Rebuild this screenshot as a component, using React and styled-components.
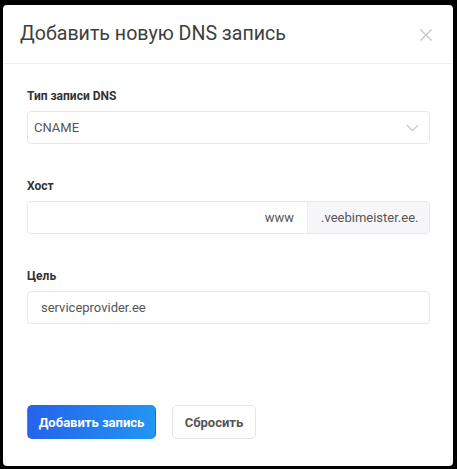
import React from "react";
import styled, { createGlobalStyle } from "styled-components";

const Global = createGlobalStyle`
  html, body { margin: 0; padding: 0; background: #000; }
  body { font-family: Roboto, "Noto Sans", sans-serif; }
  * { box-sizing: border-box; }
`;

const Page = styled.div`
  padding: 5px 0 0 3px;
  width: 457px;
  height: 469px;
`;

const Dialog = styled.div`
  width: 450px;
  height: 461px;
  background: #fff;
  border-radius: 4px;
  display: flex;
  flex-direction: column;
`;

const Header = styled.div`
  height: 59px;
  border-bottom: 1px solid #efeff5;
  display: flex;
  align-items: center;
  justify-content: space-between;
  padding: 0 20px 0 17px;
`;

const Title = styled.h2`
  margin: 0;
  font-size: 19.6px;
  font-weight: 400;
  color: #3e3e3e;
  margin-top: -1px;
`;

const Close = styled.button`
  border: 0;
  background: none;
  padding: 0;
  width: 14px;
  height: 14px;
  display: flex;
  margin-top: 2px;
`;

const Body = styled.div`
  padding: 24px 23px 0 24px;
  display: flex;
  flex-direction: column;
  gap: 34px;
`;

const Field = styled.div`
  display: flex;
  flex-direction: column;
  gap: 7px;
`;

const Label = styled.label`
  font-size: 12px;
  line-height: 16px;
  font-weight: 700;
  color: #333;
`;

const Control = styled.div`
  height: 33px;
  border: 1px solid #e6e6ee;
  border-radius: 4px;
  display: flex;
  align-items: center;
  overflow: hidden;
  font-size: 13px;
  color: #555;
`;

const Value = styled.span`
  flex: 1;
  padding: 0 ${(p) => p.$pad}px;
  text-align: ${(p) => p.$align || "left"};
`;

const Chevron = styled.svg`
  margin-right: 10px;
`;

const Addon = styled.span`
  align-self: stretch;
  display: flex;
  align-items: center;
  background: #f7f7f9;
  border-left: 1px solid #ededf2;
  padding: 0 13px 0 13px;
  width: 122px;
`;

const Footer = styled.div`
  display: flex;
  gap: 16px;
  padding: 81px 0 0 24px;
`;

const Button = styled.button`
  height: 34px;
  padding: 0;
  white-space: nowrap;
  border-radius: 5px;
  font-family: Roboto, "Noto Sans", sans-serif;
  font-size: 13px;
  font-weight: 700;
  border: 1px solid ${(p) => (p.$primary ? "transparent" : "#e4e4ec")};
  color: ${(p) => (p.$primary ? "#fff" : "#555")};
  background: ${(p) =>
    p.$primary ? "linear-gradient(90deg, #2563eb 0%, #2196f3 100%)" : "#fff"};
  width: ${(p) => p.$w}px;
`;

export default function App() {
  return (
    <Page>
      <Global />
      <Dialog>
        <Header>
          <Title>Добавить новую DNS запись</Title>
          <Close aria-label="close">
            <svg width="14" height="14" viewBox="0 0 14 14">
              <path d="M1.5 1.5 L12.5 12.5 M12.5 1.5 L1.5 12.5" stroke="#c4c4c4" strokeWidth="1.4" />
            </svg>
          </Close>
        </Header>
        <Body>
          <Field>
            <Label>Тип записи DNS</Label>
            <Control>
              <Value $pad={6}>CNAME</Value>
              <Chevron width="13" height="8" viewBox="0 0 13 8">
                <path d="M0.7 0.8 L6.5 6.6 L12.3 0.8" fill="none" stroke="#c4c4c8" strokeWidth="1.1" />
              </Chevron>
            </Control>
          </Field>
          <Field>
            <Label>Хост</Label>
            <Control>
              <Value $pad={13} $align="right">www</Value>
              <Addon>.veebimeister.ee.</Addon>
            </Control>
          </Field>
          <Field>
            <Label>Цель</Label>
            <Control>
              <Value $pad={13}>serviceprovider.ee</Value>
            </Control>
          </Field>
        </Body>
        <Footer>
          <Button $primary $w={129}>Добавить запись</Button>
          <Button $w={84}>Сбросить</Button>
        </Footer>
      </Dialog>
    </Page>
  );
}
